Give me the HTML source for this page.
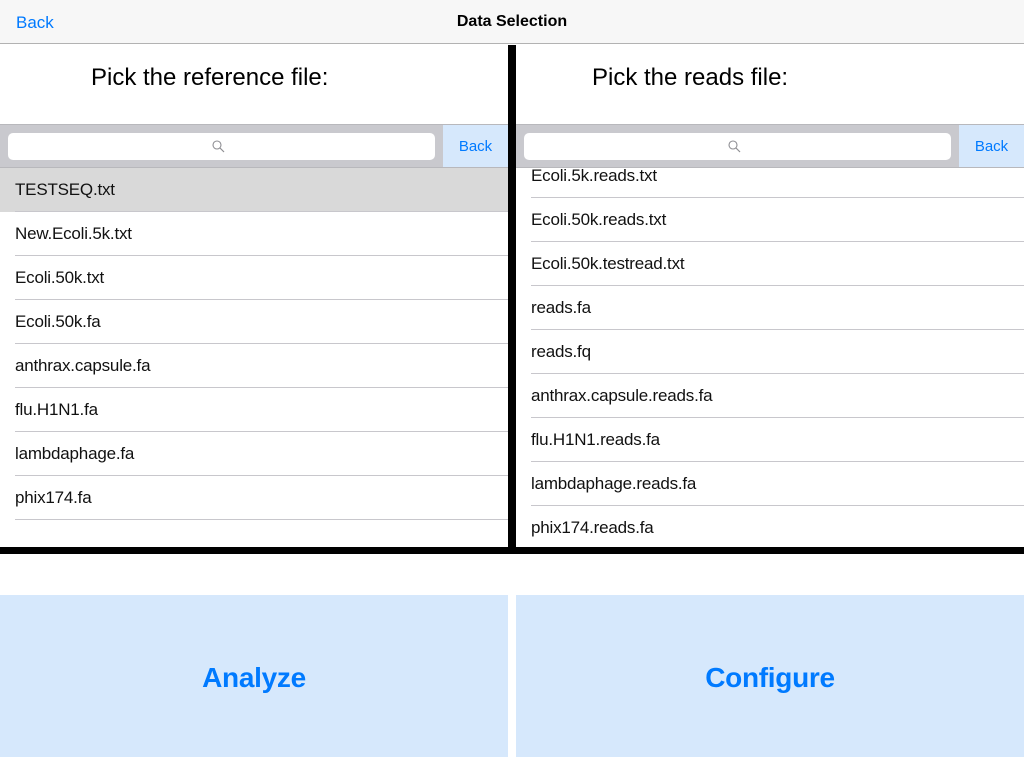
<!DOCTYPE html>
<html><head><style>
*{margin:0;padding:0;box-sizing:border-box}
body{width:1024px;height:768px;background:#fff;font-family:"Liberation Sans",sans-serif;position:relative;overflow:hidden}
.abs{position:absolute}
.nav{left:0;top:0;width:1024px;height:44px;background:#f7f7f7;border-bottom:1px solid #b2b2b2}
.blue{color:#007aff}
.title{font-size:24px;color:#000}
.band{height:44px;top:124px;background:#c9c9ce;border-top:1px solid #b8b8bc;border-bottom:1px solid #b8b8bc}
.field{top:8px;height:27px;background:#fff;border-radius:5px}
.bk{top:0;height:42px;background:#d6e8fc;font-size:15px;color:#007aff;line-height:43px;text-align:center}
.row{position:absolute;height:44px;font-size:17px;line-height:43px;padding-left:15px;color:#111;letter-spacing:-0.2px}
.row:after{content:"";position:absolute;left:15px;right:0;bottom:0;height:1px;background:#c8c7cc}
.btn{background:#d6e8fc;color:#007aff;font-weight:bold;font-size:28px;text-align:center;line-height:165px;letter-spacing:-0.3px}
</style></head><body>
<div class="abs nav"></div>
<div class="abs blue" style="left:16px;top:13px;font-size:17px">Back</div>
<div class="abs" style="left:0;width:1024px;top:13px;text-align:center;font-size:16px;font-weight:bold">Data Selection</div>

<div class="abs" style="left:0;top:45px;width:508px;height:502px;overflow:hidden">
 <div class="abs title" style="left:91px;top:19px">Pick the reference file:</div>
 <div class="abs" style="left:0;top:123px;width:508px;height:379px;overflow:hidden">
  <div class="row" style="top:0;width:508px;background:#d9d9d9">TESTSEQ.txt</div>
  <div class="row" style="top:44px;width:508px">New.Ecoli.5k.txt</div>
  <div class="row" style="top:88px;width:508px">Ecoli.50k.txt</div>
  <div class="row" style="top:132px;width:508px">Ecoli.50k.fa</div>
  <div class="row" style="top:176px;width:508px">anthrax.capsule.fa</div>
  <div class="row" style="top:220px;width:508px">flu.H1N1.fa</div>
  <div class="row" style="top:264px;width:508px">lambdaphage.fa</div>
  <div class="row" style="top:308px;width:508px">phix174.fa</div>
 </div>
 <div class="abs band" style="left:0;top:79px;width:508px">
  <div class="abs field" style="left:8px;width:427px"><svg class="abs" style="left:204px;top:7px" width="13" height="13" viewBox="0 0 13 13"><circle cx="5" cy="5" r="4" fill="none" stroke="#8e8e93" stroke-width="1.1"/><line x1="8" y1="8" x2="12" y2="12" stroke="#8e8e93" stroke-width="1.2"/></svg></div>
  <div class="abs bk" style="left:443px;width:65px">Back</div>
 </div>
</div>
<div class="abs" style="left:508px;top:45px;width:8px;height:509px;background:#000"></div>
<div class="abs" style="left:516px;top:45px;width:508px;height:502px;overflow:hidden">
 <div class="abs title" style="left:76px;top:19px">Pick the reads file:</div>
 <div class="abs" style="left:0;top:123px;width:508px;height:379px;overflow:hidden">
  <div class="row" style="top:-14px;width:508px">Ecoli.5k.reads.txt</div>
  <div class="row" style="top:30px;width:508px">Ecoli.50k.reads.txt</div>
  <div class="row" style="top:74px;width:508px">Ecoli.50k.testread.txt</div>
  <div class="row" style="top:118px;width:508px">reads.fa</div>
  <div class="row" style="top:162px;width:508px">reads.fq</div>
  <div class="row" style="top:206px;width:508px">anthrax.capsule.reads.fa</div>
  <div class="row" style="top:250px;width:508px">flu.H1N1.reads.fa</div>
  <div class="row" style="top:294px;width:508px">lambdaphage.reads.fa</div>
  <div class="row" style="top:338px;width:508px">phix174.reads.fa</div>
 </div>
 <div class="abs band" style="left:0;top:79px;width:508px">
  <div class="abs field" style="left:8px;width:427px"><svg class="abs" style="left:204px;top:7px" width="13" height="13" viewBox="0 0 13 13"><circle cx="5" cy="5" r="4" fill="none" stroke="#8e8e93" stroke-width="1.1"/><line x1="8" y1="8" x2="12" y2="12" stroke="#8e8e93" stroke-width="1.2"/></svg></div>
  <div class="abs bk" style="left:443px;width:65px">Back</div>
 </div>
</div>
<div class="abs" style="left:0;top:547px;width:1024px;height:7px;background:#000"></div>

<div class="abs btn" style="left:0;top:595px;width:508px;height:162px">Analyze</div>
<div class="abs btn" style="left:516px;top:595px;width:508px;height:162px">Configure</div>
</body></html>
